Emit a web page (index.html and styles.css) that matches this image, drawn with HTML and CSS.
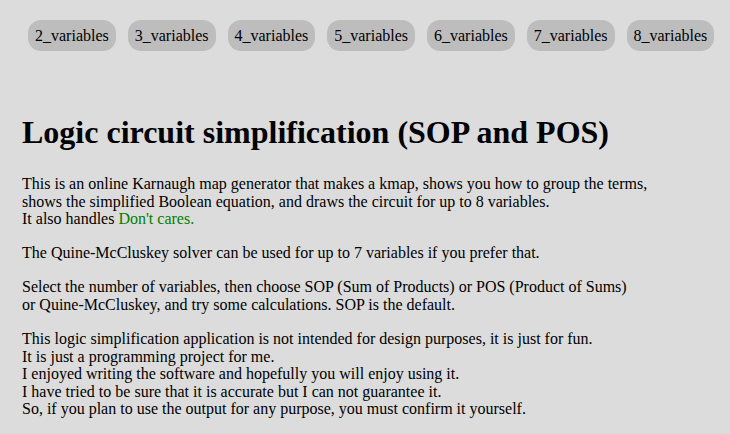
FILE: index.html
```html
<!DOCTYPE html>
<html>
<head>
<meta charset="utf-8">
<link rel="stylesheet" href="styles.css">
</head>
<body>
<nav class="tabs">
  <span class="tab">2_variables</span>
  <span class="tab">3_variables</span>
  <span class="tab">4_variables</span>
  <span class="tab">5_variables</span>
  <span class="tab">6_variables</span>
  <span class="tab">7_variables</span>
  <span class="tab">8_variables</span>
</nav>
<main class="content">
  <h1 class="title">Logic circuit simplification (SOP and POS)</h1>
  <p>This is an online Karnaugh map generator that makes a kmap, shows you how to group the terms,<br>shows the simplified Boolean equation, and draws the circuit for up to 8 variables.<br>It also handles <span class="green">Don't cares.</span></p>
  <p>The Quine-McCluskey solver can be used for up to 7 variables if you prefer that.</p>
  <p>Select the number of variables, then choose SOP (Sum of Products) or POS (Product of Sums)<br>or Quine-McCluskey, and try some calculations. SOP is the default.</p>
  <p>This logic simplification application is not intended for design purposes, it is just for fun.<br>It is just a programming project for me.<br>I enjoyed writing the software and hopefully you will enjoy using it.<br>I have tried to be sure that it is accurate but I can not guarantee it.<br>So, if you plan to use the output for any purpose, you must confirm it yourself.</p>
</main>
</body>
</html>
```

FILE: styles.css
```css
html, body {
  margin: 0;
  padding: 0;
  background: #dcdcdc;
}
body {
  font-family: "Liberation Serif", "Times New Roman", serif;
  font-size: 16px;
  color: #000;
  overflow: hidden;
}
.tabs {
  display: flex;
  gap: 12px;
  padding: 20px 0 0 28px;
  white-space: nowrap;
}
.tab {
  display: inline-block;
  background: #bdbdbd;
  border-radius: 13px;
  padding: 7px 7px 6px;
  line-height: 18px;
  flex: none;
}
.content {
  padding: 0 0 0 22px;
}
.title {
  font-size: 32px;
  font-weight: bold;
  margin: 63px 0 24px;
}
.content p {
  margin: 0 0 16.5px;
  line-height: 17.6px;
}
.green {
  color: #008000;
}
```
